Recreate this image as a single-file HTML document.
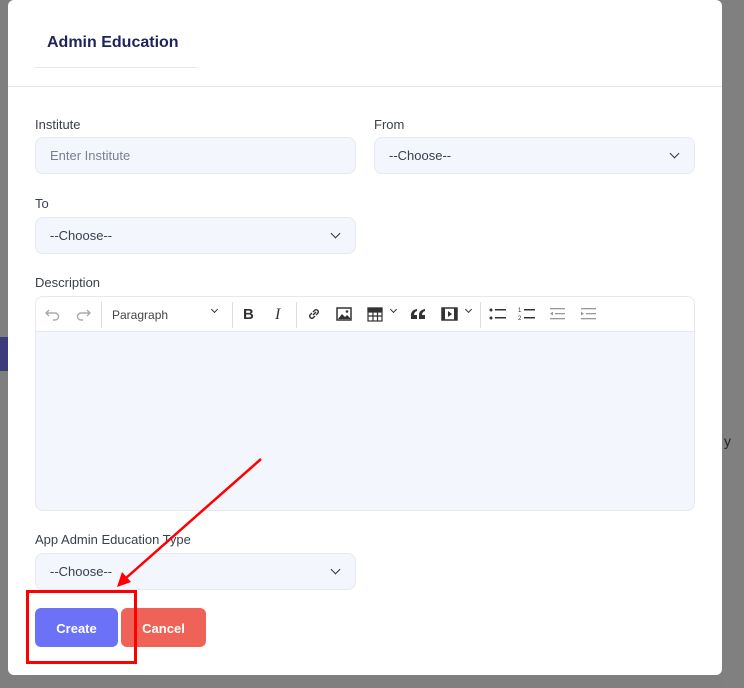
<!DOCTYPE html>
<html><head><meta charset="utf-8"><style>
*{box-sizing:border-box;margin:0;padding:0}
body{width:744px;height:688px;background:#7f7f7f;position:relative;overflow:hidden;font-family:"Liberation Sans",sans-serif;color:#333}
.abs{position:absolute}
.modal{left:8px;top:0;width:714px;height:675px;background:#fff;border-radius:6px}
.lbl{font-size:13px;color:#3a3f4c}
.inp{background:#f3f6fd;border:1px solid #e5e9f2;border-radius:8px;height:37px;font-size:13px;padding:0 14px;display:flex;align-items:center;justify-content:space-between;color:#3a3f4c}
.chev{width:7px;height:7px;border-right:1.5px solid #333;border-bottom:1.5px solid #333;transform:rotate(45deg);margin-top:-4px;margin-right:2px}
.tb{font-size:13px;color:#444}
.btn{height:39px;border-radius:6px;color:#fff;font-weight:bold;font-size:13px;display:flex;align-items:center;justify-content:center;padding-top:2px}
</style></head><body>
<div class="abs" style="left:0;top:337px;width:8px;height:34px;background:#3a3d7a"></div>
<div class="abs" style="left:722px;top:0;width:22px;height:688px;background:#808080"></div>
<div class="abs" style="left:724px;top:433px;font-size:14px;color:#222">y</div>
<div class="abs modal"></div>
<div class="abs" style="left:47px;top:34px;font-size:16px;font-weight:bold;color:#1e2459">Admin Education</div>
<div class="abs" style="left:35px;top:67px;width:163px;height:1px;background:#e8e8ee"></div>
<div class="abs" style="left:8px;top:86px;width:714px;height:1px;background:#e6e6ea"></div>

<div class="abs lbl" style="left:35px;top:117px">Institute</div>
<div class="abs inp" style="left:35px;top:137px;width:321px;color:#7a7f8c">Enter Institute</div>
<div class="abs lbl" style="left:374px;top:117px">From</div>
<div class="abs inp" style="left:374px;top:137px;width:321px">--Choose--<span class="chev"></span></div>
<div class="abs lbl" style="left:35px;top:196px">To</div>
<div class="abs inp" style="left:35px;top:217px;width:321px">--Choose--<span class="chev"></span></div>
<div class="abs lbl" style="left:35px;top:275px">Description</div>

<div class="abs" style="left:35px;top:296px;width:660px;height:215px;border:1px solid #e6e8ee;border-radius:8px;background:#f3f6fd;overflow:hidden">
 <div style="height:35px;background:#fff;border-bottom:1px solid #e6e8ee;position:relative">
  <svg class="abs" style="left:9px;top:10px" width="16" height="14" viewBox="0 0 16 14" fill="none" stroke="#aaa" stroke-width="1.4"><path d="M4 3L1 6l3 3M1 6h9a3.5 3.5 0 010 7H8"/></svg>
  <svg class="abs" style="left:39px;top:10px" width="16" height="14" viewBox="0 0 16 14" fill="none" stroke="#aaa" stroke-width="1.4"><path d="M12 3l3 3-3 3M15 6H6a3.5 3.5 0 000 7h2"/></svg>
  <div class="abs" style="left:65px;top:5px;width:1px;height:26px;background:#ddd"></div>
  <span class="abs tb" style="left:76px;top:11px;font-size:12px">Paragraph</span>
  <span class="abs chev" style="left:176px;top:14px;width:5px;height:5px"></span>
  <div class="abs" style="left:196px;top:5px;width:1px;height:26px;background:#ddd"></div>
  <span class="abs" style="left:207px;top:9px;font-weight:bold;font-size:15px;color:#333">B</span>
  <span class="abs" style="left:239px;top:9px;font-style:italic;font-family:'Liberation Serif';font-size:16px;color:#333">I</span>
  <div class="abs" style="left:260px;top:5px;width:1px;height:26px;background:#ddd"></div>
  <svg class="abs" style="left:270px;top:9px" width="16" height="16" viewBox="0 0 16 16" fill="none" stroke="#333" stroke-width="1.4"><path d="M7 9l3-3M6 7L4 9a2.2 2.2 0 003 3l2-2M10 9l2-2a2.2 2.2 0 00-3-3L7 6"/></svg>
  <svg class="abs" style="left:300px;top:10px" width="16" height="14" viewBox="0 0 16 14"><rect x="1" y="1" width="14" height="12" fill="none" stroke="#333" stroke-width="1.5"/><path d="M2 12l4-5 3 3 2-2 4 4z" fill="#333"/><circle cx="11" cy="4.5" r="1.3" fill="#333"/></svg>
  <svg class="abs" style="left:331px;top:10px" width="16" height="15" viewBox="0 0 16 15" fill="none" stroke="#333" stroke-width="1.2"><rect x="1" y="1" width="14" height="13"/><path d="M1 5h14M1 9h14M6 1v13M10.5 1v13"/><rect x="1" y="1" width="14" height="3" fill="#333"/></svg>
  <span class="abs chev" style="left:355px;top:14px;width:5px;height:5px"></span>
  <svg class="abs" style="left:375px;top:12px" width="15" height="10" viewBox="0 0 15 10" fill="#333"><path d="M0 10V6q0-5 6-6v2q-3 1-3 4h3v4zM8 10V6q0-5 6-6v2q-3 1-3 4h3v4z"/></svg>
  <svg class="abs" style="left:405px;top:10px" width="17" height="14" viewBox="0 0 17 14"><rect x="1" y="1" width="15" height="12" fill="none" stroke="#333" stroke-width="1.5"/><rect x="1" y="1" width="3" height="12" fill="#333"/><rect x="13" y="1" width="3" height="12" fill="#333"/><path d="M7 4l4 3-4 3z" fill="#333"/></svg>
  <span class="abs chev" style="left:430px;top:14px;width:5px;height:5px"></span>
  <div class="abs" style="left:444px;top:5px;width:1px;height:26px;background:#ddd"></div>
  <svg class="abs" style="left:453px;top:10px" width="18" height="14" viewBox="0 0 18 14" fill="#333"><circle cx="2" cy="3" r="1.5"/><circle cx="2" cy="11" r="1.5"/><rect x="6" y="2" width="11" height="1.5"/><rect x="6" y="10" width="11" height="1.5"/></svg>
  <svg class="abs" style="left:482px;top:9px" width="18" height="15" viewBox="0 0 18 15" fill="#333"><text x="0" y="6" font-size="6" font-family="Liberation Sans">1</text><text x="0" y="14" font-size="6" font-family="Liberation Sans">2</text><rect x="6" y="3" width="11" height="1.5"/><rect x="6" y="11" width="11" height="1.5"/></svg>
  <svg class="abs" style="left:513px;top:10px" width="16" height="14" viewBox="0 0 16 14" fill="#999"><rect x="1" y="1" width="15" height="1.3"/><rect x="6" y="6" width="10" height="1.3"/><rect x="1" y="11" width="15" height="1.3"/><path d="M1 6.6l3-2v4z"/></svg>
  <svg class="abs" style="left:544px;top:10px" width="16" height="14" viewBox="0 0 16 14" fill="#999"><rect x="1" y="1" width="15" height="1.3"/><rect x="6" y="6" width="10" height="1.3"/><rect x="1" y="11" width="15" height="1.3"/><path d="M4 6.6l-3-2v4z"/></svg>
 </div>
</div>

<div class="abs lbl" style="left:35px;top:532px">App Admin Education Type</div>
<div class="abs inp" style="left:35px;top:553px;width:321px">--Choose--<span class="chev"></span></div>

<div class="abs btn" style="left:35px;top:608px;width:83px;background:#6c72f8">Create</div>
<div class="abs btn" style="left:121px;top:608px;width:85px;background:#ef6257">Cancel</div>
<div class="abs" style="left:26px;top:590px;width:111px;height:74px;border:3px solid #f00"></div>
<svg class="abs" style="left:0;top:0" width="744" height="688"><line x1="261" y1="459" x2="126" y2="578" stroke="#f00" stroke-width="2.5"/><path d="M117 587l5-15 9 10z" fill="#f00"/></svg>
</body></html>
